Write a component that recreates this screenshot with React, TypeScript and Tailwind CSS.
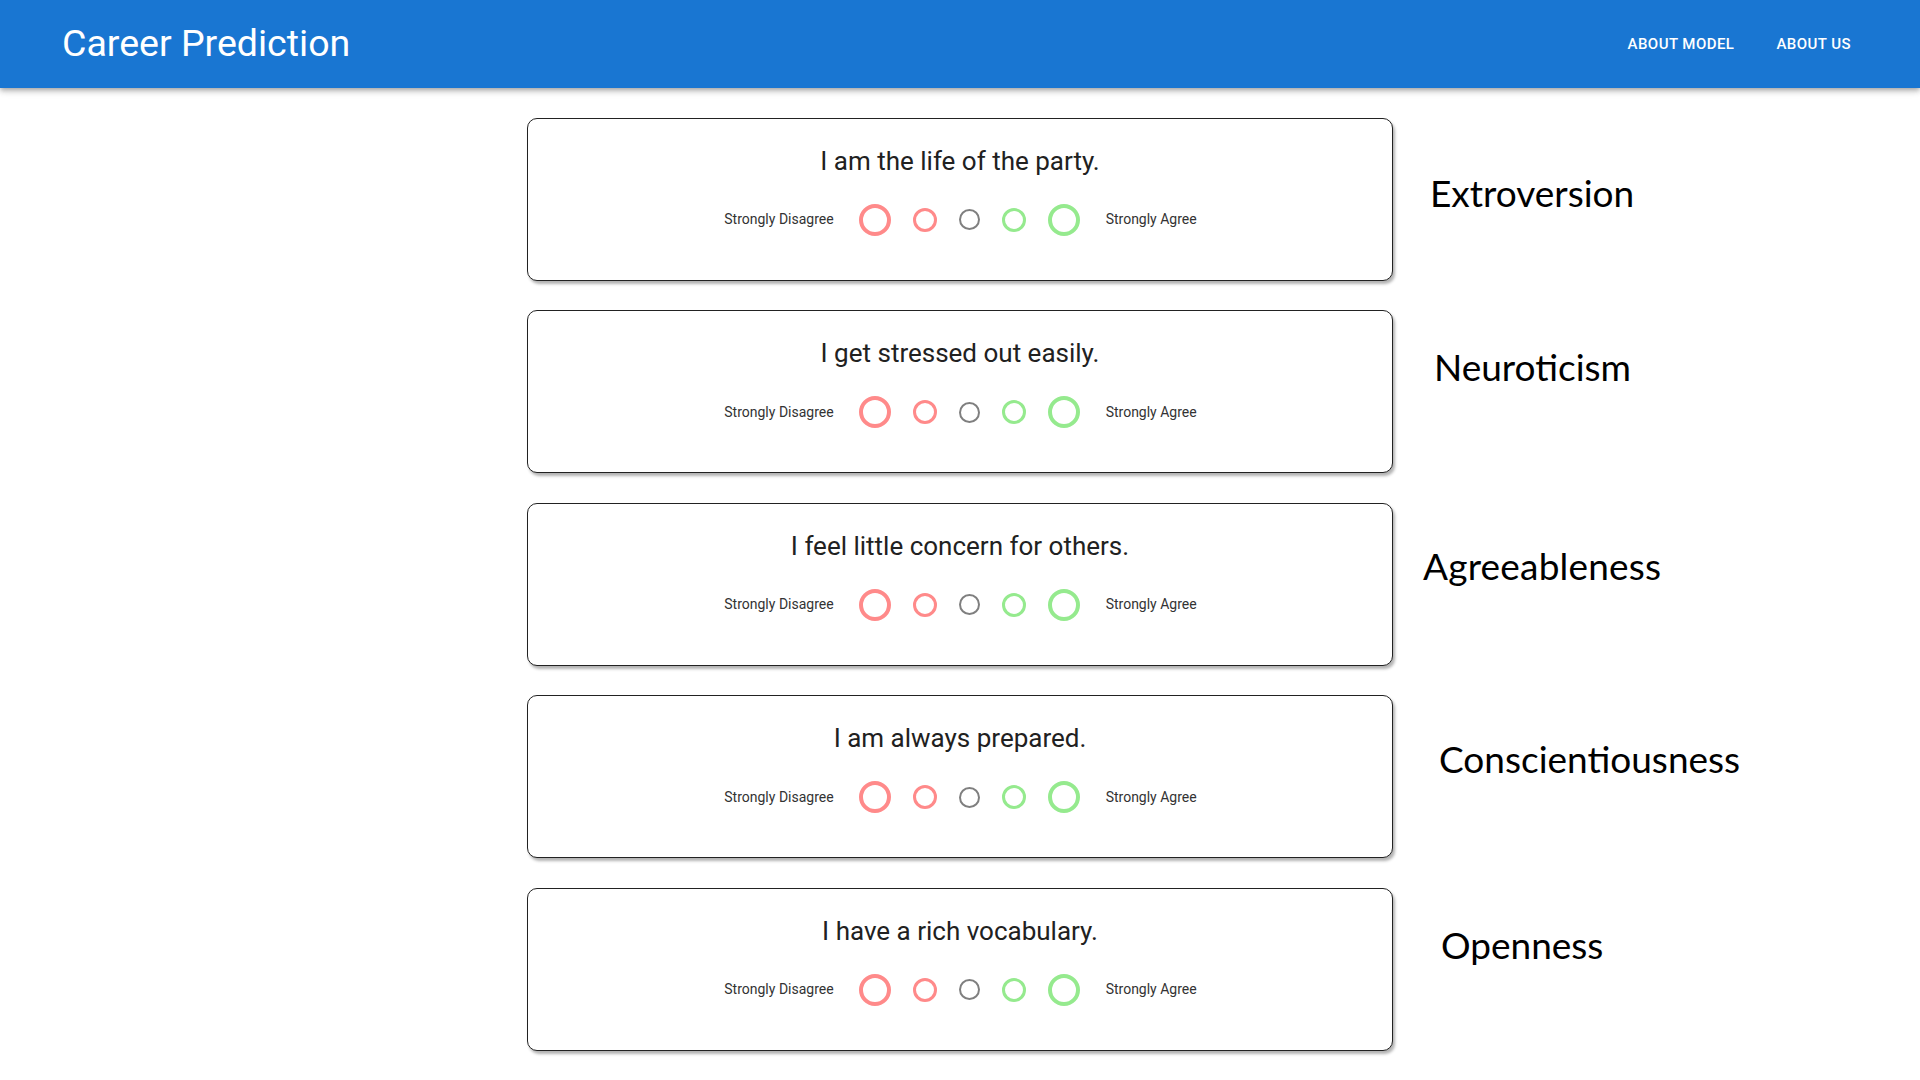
import React, { useState } from "react";

type Question = {
  id: number;
  text: string;
  trait: string;
  // where the trait label sits next to its card
  labelClass: string;
};

const QUESTIONS: Question[] = [
  { id: 1, text: "I am the life of the party.", trait: "Extroversion", labelClass: "pl-[37px] pt-[56.5px]" },
  { id: 2, text: "I get stressed out easily.", trait: "Neuroticism", labelClass: "pl-[41px] pt-[37.5px]" },
  { id: 3, text: "I feel little concern for others.", trait: "Agreeableness", labelClass: "pl-[30px] pt-[44px] tracking-[0.2px]" },
  { id: 4, text: "I am always prepared.", trait: "Conscientiousness", labelClass: "pl-[46px] pt-[45px]" },
  { id: 5, text: "I have a rich vocabulary.", trait: "Openness", labelClass: "pl-[48px] pt-[38.5px]" },
];

const OPTIONS = [
  { value: 1, className: "w-[32px] h-[32px] border-[4px] border-[#ff8a8a]" },
  { value: 2, className: "w-[24px] h-[24px] border-[3px] border-[#ff8a8a]" },
  { value: 3, className: "w-[21px] h-[21px] border-[2px] border-[#7f7f7f]" },
  { value: 4, className: "w-[24px] h-[24px] border-[3px] border-[#95ea8e]" },
  { value: 5, className: "w-[32px] h-[32px] border-[4px] border-[#95ea8e]" },
];

const QuestionCard: React.FC<{
  question: Question;
  value: number | null;
  onChange: (v: number) => void;
}> = ({ question, value, onChange }) => {
  return (
    <div className="col-start-2 h-[163px] border border-[#222] rounded-[10px] bg-white shadow-[2px_3px_3px_rgba(0,0,0,0.3)] flex flex-col items-center pt-[27px]">
      <p className="text-[26px] leading-[30px] text-[#212121]">{question.text}</p>
      <div className="mt-[28px] flex items-center gap-[22px] h-[32px] pl-[1px]">
        <span className="text-[14px] text-[#333] mr-[3px]">Strongly Disagree</span>
        {OPTIONS.map((opt) => (
          <button
            key={opt.value}
            type="button"
            onClick={() => onChange(opt.value)}
            className={`rounded-full box-border ${opt.className} ${value === opt.value ? "bg-gray-100" : "bg-transparent"}`}
          />
        ))}
        <span className="text-[14px] text-[#333] ml-[4px]">Strongly Agree</span>
      </div>
    </div>
  );
};

export default function App() {
  const [answers, setAnswers] = useState<Record<number, number>>({});

  return (
    <div className="min-h-screen bg-white font-['Roboto',sans-serif]">
      {/* Header */}
      <header className="h-[88px] bg-[#1976d2] shadow-[0_2px_4px_-1px_rgba(0,0,0,0.2),0_4px_5px_0_rgba(0,0,0,0.14),0_1px_10px_0_rgba(0,0,0,0.12)] flex items-center justify-between pl-[62px] pr-[57px] relative z-10">
        <h1 className="text-[37.5px] font-normal text-white -mt-[2px]">Career Prediction</h1>
        <nav className="flex items-center">
          <a className="px-[12px] py-[6px] text-[15px] font-medium uppercase tracking-[0.03em] text-white">About Model</a>
          <a className="ml-[18px] px-[12px] py-[6px] text-[15px] font-medium uppercase tracking-[0.03em] text-white">About Us</a>
        </nav>
      </header>

      {/* Questions */}
      <main className="pt-[29.5px] flex flex-col gap-[29.5px] pb-[30px]">
        {QUESTIONS.map((q) => (
          <div key={q.id} className="grid grid-cols-[1fr_866px_1fr]">
            <QuestionCard
              question={q}
              value={answers[q.id] ?? null}
              onChange={(v) => setAnswers((a) => ({ ...a, [q.id]: v }))}
            />
            <div className={q.labelClass}>
              <span className="font-['Lato',sans-serif] text-[37px] leading-none text-black">{q.trait}</span>
            </div>
          </div>
        ))}
      </main>
    </div>
  );
}
